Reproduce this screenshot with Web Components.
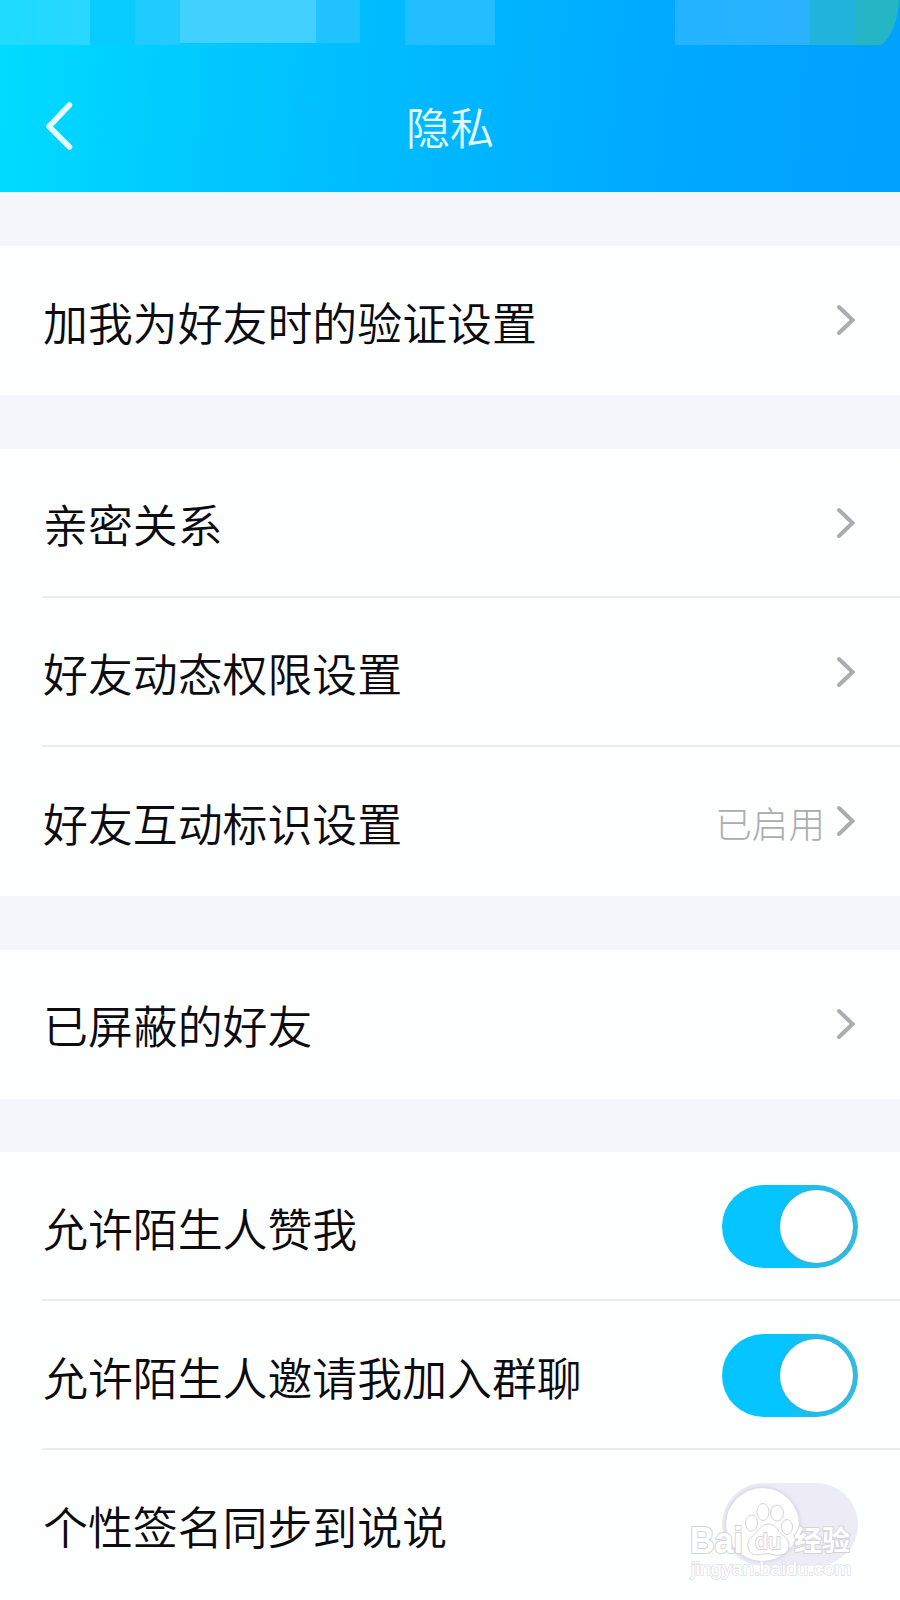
<!DOCTYPE html>
<html lang="zh-CN">
<head>
<meta charset="utf-8">
<title>隐私</title>
<style>
  html, body {
    margin: 0;
    padding: 0;
  }
  body {
    width: 900px;
    height: 1600px;
    overflow: hidden;
    background: #f5f6fb;
    font-family: "Noto Sans CJK SC", sans-serif;
  }
</style>
</head>
<body>
<privacy-screen>
  <title-bar slot="header">隐私</title-bar>

  <settings-group>
    <setting-row>加我为好友时的验证设置</setting-row>
  </settings-group>

  <settings-group>
    <setting-row>亲密关系</setting-row>
    <setting-row>好友动态权限设置</setting-row>
    <setting-row value="已启用">好友互动标识设置</setting-row>
  </settings-group>

  <settings-group>
    <setting-row>已屏蔽的好友</setting-row>
  </settings-group>

  <settings-group>
    <setting-row>允许陌生人赞我<toggle-switch slot="control" on></toggle-switch></setting-row>
    <setting-row>允许陌生人邀请我加入群聊<toggle-switch slot="control" on></toggle-switch></setting-row>
    <setting-row>个性签名同步到说说<toggle-switch slot="control"></toggle-switch></setting-row>
  </settings-group>

  <water-mark slot="overlay"></water-mark>
</privacy-screen>

<script>
// width, height and fill of each status bar block
const blocks = [
  [90, 45, 'linear-gradient(90deg, #1ddbff, #29d7ff)'],
  [45, 45, '#08ccff'],
  [45, 45, '#20ccff'],
  [136, 43, '#42d0ff'],
  [44, 43, '#20c2ff'],
  [45, 45, 'transparent'],
  [90, 45, '#22beff'],
  [180, 45, 'transparent'],
  [135, 45, 'linear-gradient(90deg, #22b4ff, #2bb2ff)'],
  [90, 45, 'linear-gradient(90deg, #22b4dc 48%, #24b6c4 54%)'],
];

class PrivacyScreen extends HTMLElement {
  constructor() {
    super();
    this.attachShadow({mode: 'open'}).innerHTML = `
      <style>
        :host {
          display: flex;
          flex-direction: column;
          position: relative;
          width: 900px;
          height: 1600px;
          overflow: hidden;
        }
        main {
          display: flex;
          flex-direction: column;
          gap: 53.4px;
          padding-top: 54px;
        }
      </style>
      <slot name="header"></slot>
      <main><slot></slot></main>
      <slot name="overlay"></slot>
    `;
  }
}

class StatusStrip extends HTMLElement {
  constructor() {
    super();
    const shadow = this.attachShadow({mode: 'open'});
    shadow.innerHTML = `
      <style>
        :host {
          display: flex;
          height: 45px;
        }
        i:last-of-type {
          clip-path: path('M0 0H89Q87 33 71 45H0Z');
        }
      </style>
    `;
    blocks.forEach(([width, height, fill]) => {
      const block = document.createElement('i');
      block.style.cssText = `flex: none; width: ${width}px; height: ${height}px; background: ${fill}`;
      shadow.append(block);
    });
  }
}

class TitleBar extends HTMLElement {
  constructor() {
    super();
    this.attachShadow({mode: 'open'}).innerHTML = `
      <style>
        :host {
          display: flex;
          flex-direction: column;
          flex: none;
          height: 192px;
          color: #e6ffff;
          background: linear-gradient(95deg, #00dcff, #00c8ff 24%, #00b8ff 48%, #00a8ff 76%, #00a1ff);
        }
        nav {
          display: grid;
          grid-template-columns: 100px 1fr 100px;
          align-items: center;
          flex: 1;
        }
        svg {
          margin: 14px 0 0 44px;
        }
        h1 {
          margin: 14px 0 0;
          font-size: 44px;
          line-height: 60px;
          font-weight: 350;
          text-align: center;
        }
      </style>
      <status-strip></status-strip>
      <nav>
        <svg width="32" height="52" viewBox="0 0 32 52" fill="none" stroke="currentColor" stroke-width="5.500" stroke-linecap="round" stroke-linejoin="round">
          <path d="M25.500 5L5 26.500L25.500 47"/>
        </svg>
        <h1><slot></slot></h1>
      </nav>
    `;
  }
}

class SettingsGroup extends HTMLElement {
  constructor() {
    super();
    this.attachShadow({mode: 'open'}).innerHTML = `
      <style>
        :host {
          display: block;
          background: #fdfefe;
        }
        ::slotted(:not(:last-child)) {
          --line: #ebecee;
        }
      </style>
      <slot></slot>
    `;
  }
}

class SettingRow extends HTMLElement {
  constructor() {
    super();
    const value = this.getAttribute('value') || '';
    this.attachShadow({mode: 'open'}).innerHTML = `
      <style>
        :host {
          display: flex;
          align-items: center;
          box-sizing: border-box;
          height: 149.2px;
          padding-right: 42px;
          color: #0b0b10;
          background: linear-gradient(var(--line, transparent), var(--line, transparent)) 42px 100% / 100% 2px no-repeat;
        }
        .label {
          flex: 1;
          padding: 2px 0 0 43px;
          font-size: 44.9px;
          line-height: 60px;
          font-weight: 350;
          white-space: nowrap;
        }
        .value {
          padding: 1px 11px 0 0;
          color: #acacae;
          font-size: 36.6px;
          font-weight: 300;
        }
        svg {
          margin: 0 2px 1px 0;
        }
      </style>
      <span class="label"><slot></slot></span>
      ${value && `<span class="value">${value}</span>`}
      <slot name="control">
        <svg width="20" height="32" viewBox="0 0 20 32" fill="none" stroke="#abacb0" stroke-width="4" stroke-linecap="round">
          <path d="M3 3L16.500 16L3 29"/>
        </svg>
      </slot>
    `;
  }
}

class ToggleSwitch extends HTMLElement {
  constructor() {
    super();
    this.attachShadow({mode: 'open'}).innerHTML = `
      <style>
        :host {
          display: flex;
          align-items: center;
          box-sizing: border-box;
          width: 136px;
          height: 83px;
          margin-bottom: 1px;
          padding: 0 5px 0 4px;
          border-radius: 42px;
          background: #ecebf6;
        }
        :host([on]) {
          justify-content: flex-end;
          background: linear-gradient(90deg, #04c5ff 45%, #20bfea 70%, #32bde0);
        }
        .knob {
          width: 73px;
          height: 73px;
          border-radius: 50%;
          background: #fff;
          box-shadow: 0 0 4px #8888a066;
        }
      </style>
      <div class="knob"></div>
    `;
  }
}

class WaterMark extends HTMLElement {
  constructor() {
    super();
    this.attachShadow({mode: 'open'}).innerHTML = `
      <style>
        :host {
          position: absolute;
          left: 680px;
          top: 1495px;
          width: 190px;
          height: 95px;
        }
        svg {
          display: block;
        }
        text {
          font-family: "Liberation Sans", "Noto Sans CJK SC", sans-serif;
        }
      </style>
      <svg width="190" height="95" viewBox="0 0 190 95" fill="#fff" stroke="#d4d4d8" stroke-width="1">
        <g font-weight="bold" stroke-width="2" paint-order="stroke">
          <text x="10" y="57.500" font-size="36" textLength="53" lengthAdjust="spacingAndGlyphs">Bai</text>
          <text x="114" y="56" font-size="28" textLength="56">经验</text>
        </g>
        <ellipse cx="71.500" cy="28" rx="6" ry="8"/>
        <ellipse cx="83" cy="17" rx="6" ry="8.500"/>
        <ellipse cx="97" cy="18" rx="6.500" ry="8"/>
        <ellipse cx="107" cy="32" rx="5.500" ry="7.500"/>
        <path d="M88 29C82 29 79 35 75 39C70 43 67 46 68 52C69 60 77 61 83 59Q89 58 95 60C103 61 109 59 109 50C109 43 101 40 98 35C95 31 92 29 88 29Z"/>
        <text x="75" y="54" font-size="22" textLength="26" lengthAdjust="spacingAndGlyphs" stroke-width="1.800" paint-order="stroke">du</text>
        <text x="11" y="80" font-size="18" textLength="160" lengthAdjust="spacingAndGlyphs" stroke="#e2e2e6" stroke-width="1.600" paint-order="stroke">jingyan.baidu.com</text>
      </svg>
    `;
  }
}

customElements.define('privacy-screen', PrivacyScreen);
customElements.define('status-strip', StatusStrip);
customElements.define('title-bar', TitleBar);
customElements.define('settings-group', SettingsGroup);
customElements.define('setting-row', SettingRow);
customElements.define('toggle-switch', ToggleSwitch);
customElements.define('water-mark', WaterMark);
</script>
</body>
</html>
